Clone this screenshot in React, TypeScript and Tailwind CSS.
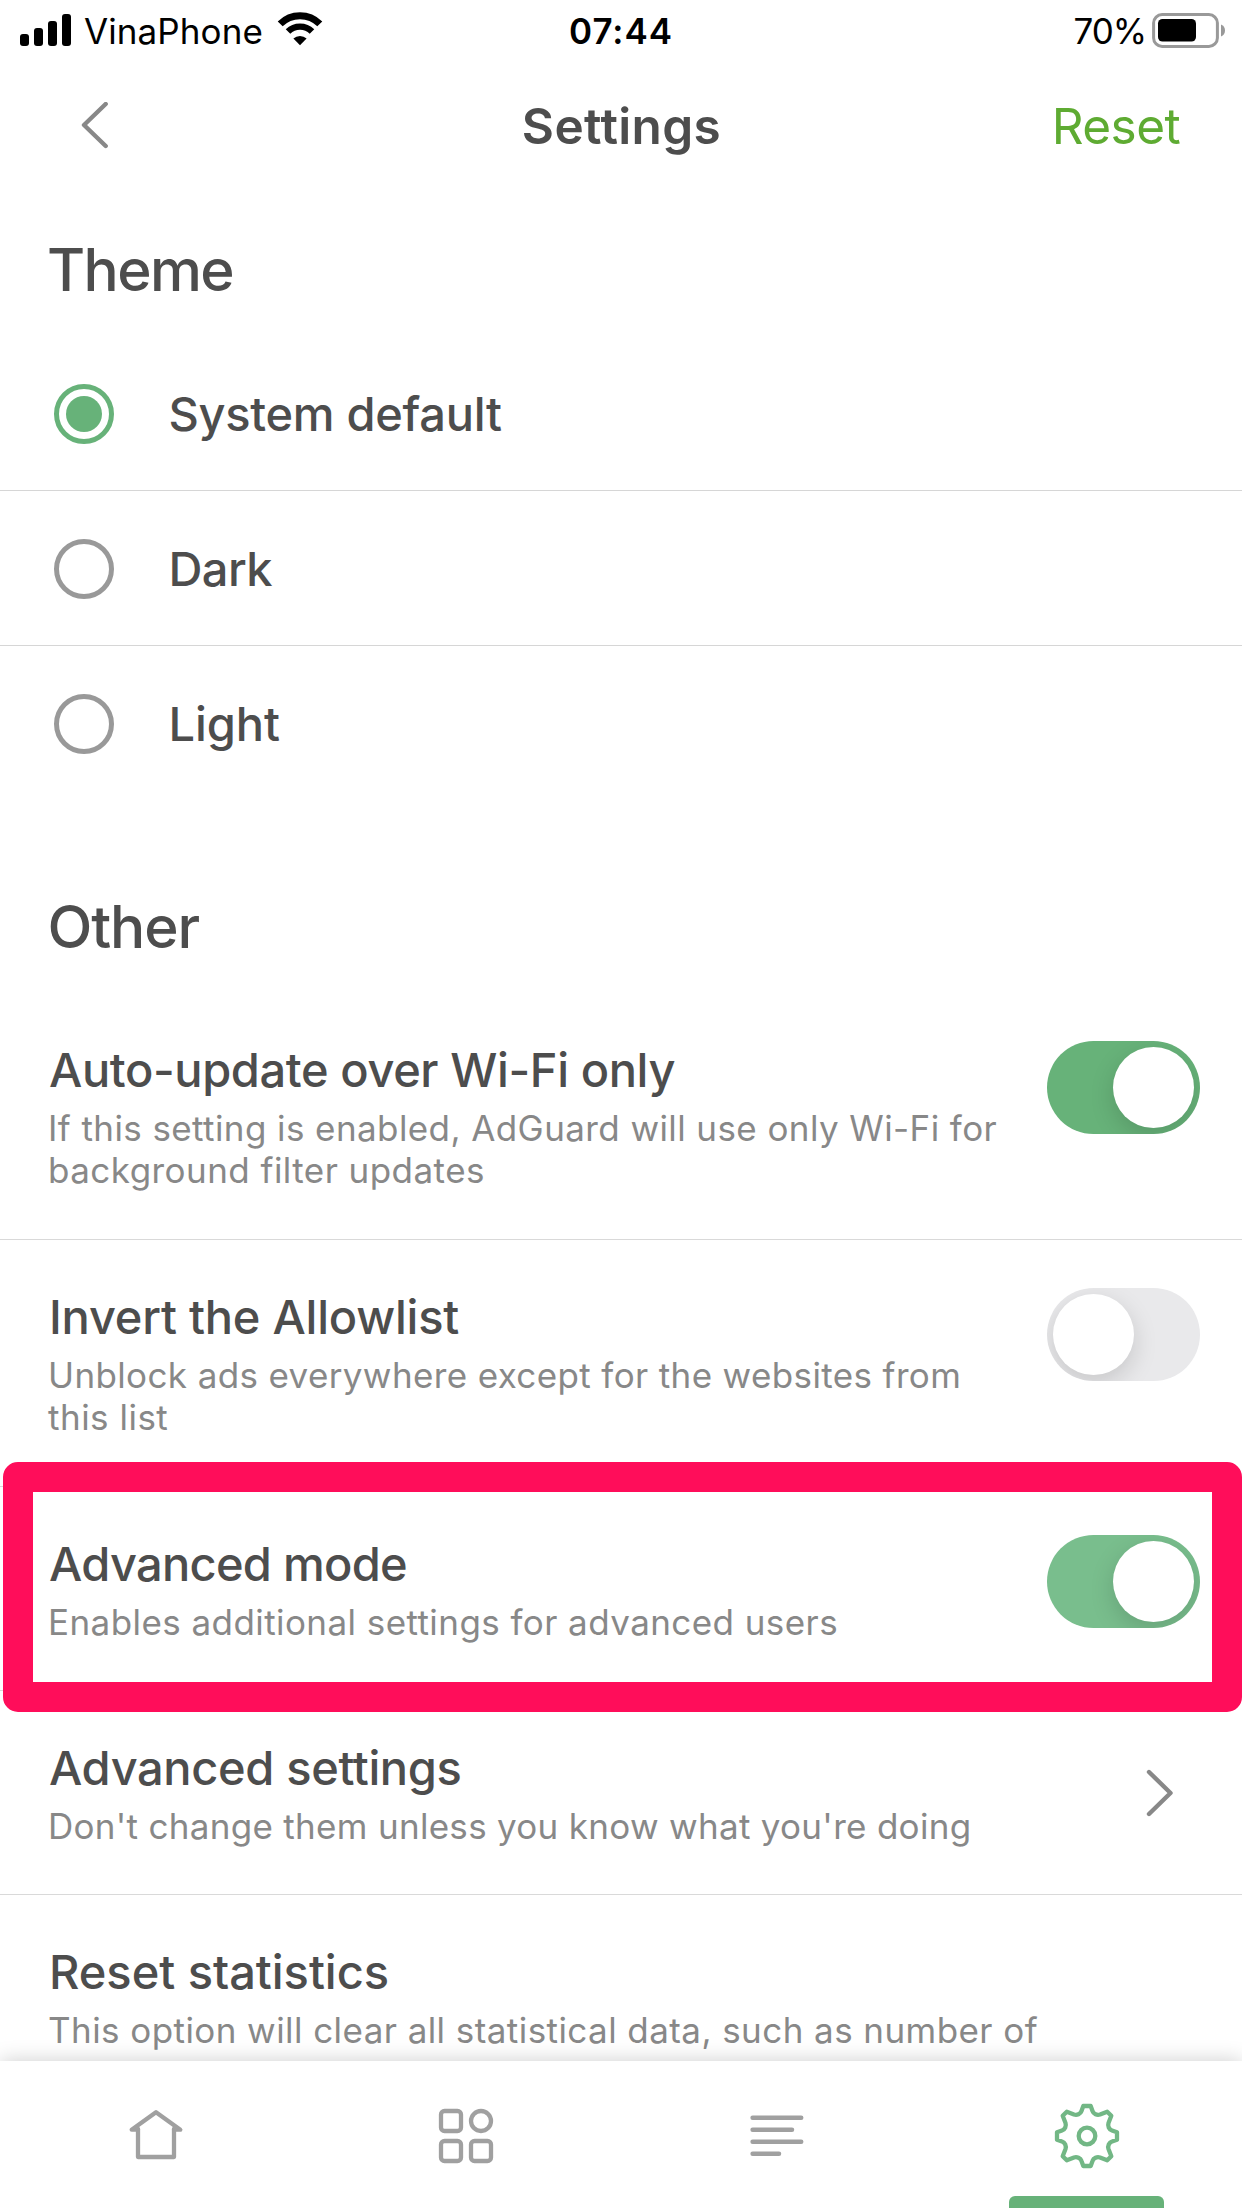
import React from "react";
import type { ReactNode } from "react";

function SignalBars() {
  return (
    <svg width="52" height="34" viewBox="0 0 52 34" fill="#000">
      <rect x="0" y="21" width="9" height="12" rx="3" />
      <rect x="14" y="15" width="9" height="18" rx="3" />
      <rect x="28" y="8" width="9" height="25" rx="3" />
      <rect x="42" y="1" width="9" height="32" rx="3" />
    </svg>
  );
}

function WifiIcon() {
  return (
    <svg width="46" height="34" viewBox="0 0 46 34" fill="none" stroke="#000">
      <path d="M3.2 11.9 A28 28 0 0 1 42.8 11.9" strokeWidth="7" />
      <path d="M11 19.6 A17 17 0 0 1 35 19.6" strokeWidth="6.4" />
      <path d="M23 33.2 L16.4 26.6 A9.4 9.4 0 0 1 29.6 26.6 Z" fill="#000" stroke="none" />
    </svg>
  );
}

function BatteryIcon() {
  return (
    <svg width="74" height="36" viewBox="0 0 74 36">
      <rect x="1.6" y="1.6" width="63.8" height="31.8" rx="8.5" fill="none" stroke="#999" strokeWidth="3" />
      <rect x="6" y="6" width="38" height="22.5" rx="4.5" fill="#000" />
      <path d="M69 11.5 C71.6 12.5 73 14.8 73 17.5 S71.6 22.5 69 23.5 Z" fill="#999" />
    </svg>
  );
}

function StatusBar() {
  return (
    <div className="grid h-[62px] grid-cols-3 text-[35px] leading-[42px] text-black">
      <div className="flex items-start pl-5 pt-[10px]">
        <div className="pt-[3px]"><SignalBars /></div>
        <span className="ml-[12px] tracking-[0.1px]">VinaPhone</span>
        <div className="ml-[14px] pt-[2px]"><WifiIcon /></div>
      </div>
      <div className="flex justify-center pt-[10px]">
        <span className="font-semibold tracking-[0.93px]">07:44</span>
      </div>
      <div className="flex items-start justify-end pr-[16px] pt-[10px]">
        <span className="mr-[6px] tracking-[-1.1px]">70%</span>
        <div className="pt-[3px]"><BatteryIcon /></div>
      </div>
    </div>
  );
}

function Header() {
  return (
    <header className="grid h-[128px] grid-cols-3 items-center text-[49.5px] leading-[60px]">
      <button className="pl-[80px]" aria-label="Back">
        <svg width="30" height="48" viewBox="0 0 30 48" fill="none" stroke="#888" strokeWidth="4.4" strokeLinecap="round" strokeLinejoin="round">
          <path d="M25.7 2 L4 23 L25.7 44" />
        </svg>
      </button>
      <h1 className="pl-px text-center font-semibold tracking-[0.38px]">Settings</h1>
      <button className="pr-[62px] text-right tracking-[-0.6px] text-[#5eab32]">Reset</button>
    </header>
  );
}

function RadioRow({ label, selected }: { label: ReactNode; selected?: boolean }) {
  return (
    <label className="flex h-[155px] items-center border-b border-[#d6d6d6] pl-[54px] last:border-transparent">
      <span
        className={
          selected
            ? "mt-0.5 flex size-[60px] items-center justify-center rounded-full border-5 border-[#67b279]"
            : "mt-0.5 size-[60px] rounded-full border-5 border-[#999]"
        }
      >
        {selected && <span className="size-[36px] rounded-full bg-[#67b279]" />}
      </span>
      <span className="ml-[54.5px] text-[47px] font-medium leading-[57px]">{label}</span>
    </label>
  );
}

function Toggle({ on, pressed }: { on?: boolean; pressed?: boolean }) {
  const track = on ? (pressed ? "bg-[#79be8d]" : "bg-[#67b279]") : "bg-[#e9e9eb]";
  return (
    <div className={`flex h-[93px] w-[153px] shrink-0 items-center overflow-hidden rounded-full px-[6px] ${track} ${on ? "justify-end" : ""}`}>
      <span className="size-[81px] rounded-full bg-white shadow-[0_8px_24px_rgba(0,0,0,0.15)]" />
    </div>
  );
}

function SettingRow({
  title,
  children,
  control,
  className,
}: {
  title: ReactNode;
  children: ReactNode;
  control?: ReactNode;
  className: string;
}) {
  return (
    <div className={`flex items-start justify-between border-b border-[#d9d9d9] pl-12 pr-[42px] pt-12 ${className}`}>
      <div>
        <h3 className="ml-px text-[47px] font-medium leading-[57px]">{title}</h3>
        <p className="mt-[8.6px] whitespace-nowrap text-[35px] leading-[42px] text-[#888]">{children}</p>
      </div>
      {control}
    </div>
  );
}

function HomeIcon() {
  return (
    <svg width="64" height="64" viewBox="0 0 64 64" fill="none" stroke="#a0a0a0" strokeWidth="4.3" strokeLinecap="round" strokeLinejoin="round">
      <path d="M14 26.7 H7.7 L32 9.3 L56.3 26.7 H50" />
      <path d="M14 26 V54 H50 V26" />
    </svg>
  );
}

function GridIcon() {
  return (
    <svg width="64" height="64" viewBox="0 0 64 64" fill="none" stroke="#a0a0a0" strokeWidth="4.3">
      <rect x="7" y="7" width="20" height="20" rx="3.5" />
      <circle cx="47" cy="17" r="10" />
      <rect x="7" y="37" width="20" height="20" rx="3.5" />
      <rect x="37" y="37" width="20" height="20" rx="3.5" />
    </svg>
  );
}

function LinesIcon() {
  return (
    <svg width="64" height="64" viewBox="0 0 64 64" fill="none" stroke="#a0a0a0" strokeWidth="4.5" strokeLinecap="round">
      <path d="M7.6 13.7 H56.2 M7.6 25.8 H47 M7.6 37.8 H56.2 M7.6 49.8 H34" />
    </svg>
  );
}

function GearIcon() {
  return (
    <svg width="66" height="66" viewBox="-33 -33 66 66" fill="none" stroke="#72b785" strokeWidth="4.3" strokeLinejoin="round">
      <path d="M-3.7 -30 H3.7 L5.5 -25 C6.5 -22 10 -20.5 13 -21.5 L20.2 -24.3 L24.3 -20.2 L21.5 -13 C20.5 -10 22 -6.5 25 -5.5 L30 -3.7 V3.7 L25 5.5 C22 6.5 20.5 10 21.5 13 L24.3 20.2 L20.2 24.3 L13 21.5 C10 20.5 6.5 22 5.5 25 L3.7 30 H-3.7 L-5.5 25 C-6.5 22 -10 20.5 -13 21.5 L-20.2 24.3 L-24.3 20.2 L-21.5 13 C-20.5 10 -22 6.5 -25 5.5 L-30 3.7 V-3.7 L-25 -5.5 C-22 -6.5 -20.5 -10 -21.5 -13 L-24.3 -20.2 L-20.2 -24.3 L-13 -21.5 C-10 -20.5 -6.5 -22 -5.5 -25 Z" />
      <circle r="8.3" />
    </svg>
  );
}

function TabBar() {
  return (
    <nav className="relative z-20 grid h-[147px] shrink-0 grid-cols-4 bg-white shadow-[0_0_20px_rgba(0,0,0,0.2)]">
      <div className="flex justify-center pl-[2px] pt-[42px]"><HomeIcon /></div>
      <div className="flex justify-center pt-[43px]"><GridIcon /></div>
      <div className="flex justify-center pl-[2px] pt-[43px]"><LinesIcon /></div>
      <div className="flex flex-col items-center justify-between pt-[42px]">
        <GearIcon />
        <span className="h-[12px] w-[155px] rounded-t-[6px] bg-[#67b279]" />
      </div>
    </nav>
  );
}

export default function App() {
  return (
    <div className="flex h-[2208px] w-[1242px] flex-col overflow-hidden bg-white font-['Inter',sans-serif] text-[#4d4d4d]">
      <StatusBar />
      <Header />
      <main className="min-h-0 flex-1 overflow-hidden pt-[44px]">
        <h2 className="mb-[31px] pl-[47px] text-[58.5px] font-medium leading-[71px] tracking-[-1.6px]">Theme</h2>
        <div>
          <RadioRow selected label={<span className="tracking-[-0.3px]">System default</span>} />
          <RadioRow label={<span className="tracking-[-0.6px]">Dark</span>} />
          <RadioRow label={<span className="tracking-[-0.1px]">Light</span>} />
        </div>
        <h2 className="mb-[31px] mt-[90px] pl-[47.5px] text-[58.5px] font-medium leading-[71px] tracking-[-1.1px]">Other</h2>
        <SettingRow
          className="h-[247px]"
          title={<span className="tracking-[-0.39px]">Auto-update over Wi-Fi only</span>}
          control={<Toggle on />}
        >
          <span className="tracking-[0.41px]">If this setting is enabled, AdGuard will use only Wi-Fi for</span>
          <br />
          <span className="tracking-[0.45px]">background filter updates</span>
        </SettingRow>
        <SettingRow
          className="h-[247px]"
          title={<span className="tracking-[-0.23px]">Invert the Allowlist</span>}
          control={<Toggle />}
        >
          <span className="tracking-[0.37px]">Unblock ads everywhere except for the websites from</span>
          <br />
          <span className="tracking-[0.5px]">this list</span>
        </SettingRow>
        <div className="relative">
          <SettingRow
            className="h-[204px]"
            title={<span className="tracking-[-0.7px]">Advanced mode</span>}
            control={<Toggle on pressed />}
          >
            <span className="tracking-[0.43px]">Enables additional settings for advanced users</span>
          </SettingRow>
          <div className="absolute left-[3px] right-0 top-[-25px] z-10 h-[250px] rounded-[15px] border-[30px] border-[#ff0d5a]" />
        </div>
        <SettingRow
          className="h-[204px]"
          title={<span className="tracking-[-0.35px]">Advanced settings</span>}
          control={
            <svg className="mr-[26px] mt-[30px]" width="30" height="48" viewBox="0 0 30 48" fill="none" stroke="#888" strokeWidth="4.4" strokeLinecap="round" strokeLinejoin="round">
              <path d="M5 3 L26.5 24 L5 45" />
            </svg>
          }
        >
          <span className="tracking-[0.3px]">Don't change them unless you know what you're doing</span>
        </SettingRow>
        <SettingRow className="h-[247px]" title={<span className="tracking-[-0.03px]">Reset statistics</span>}>
          <span className="tracking-[0.43px]">This option will clear all statistical data, such as number of</span>
        </SettingRow>
      </main>
      <TabBar />
    </div>
  );
}
